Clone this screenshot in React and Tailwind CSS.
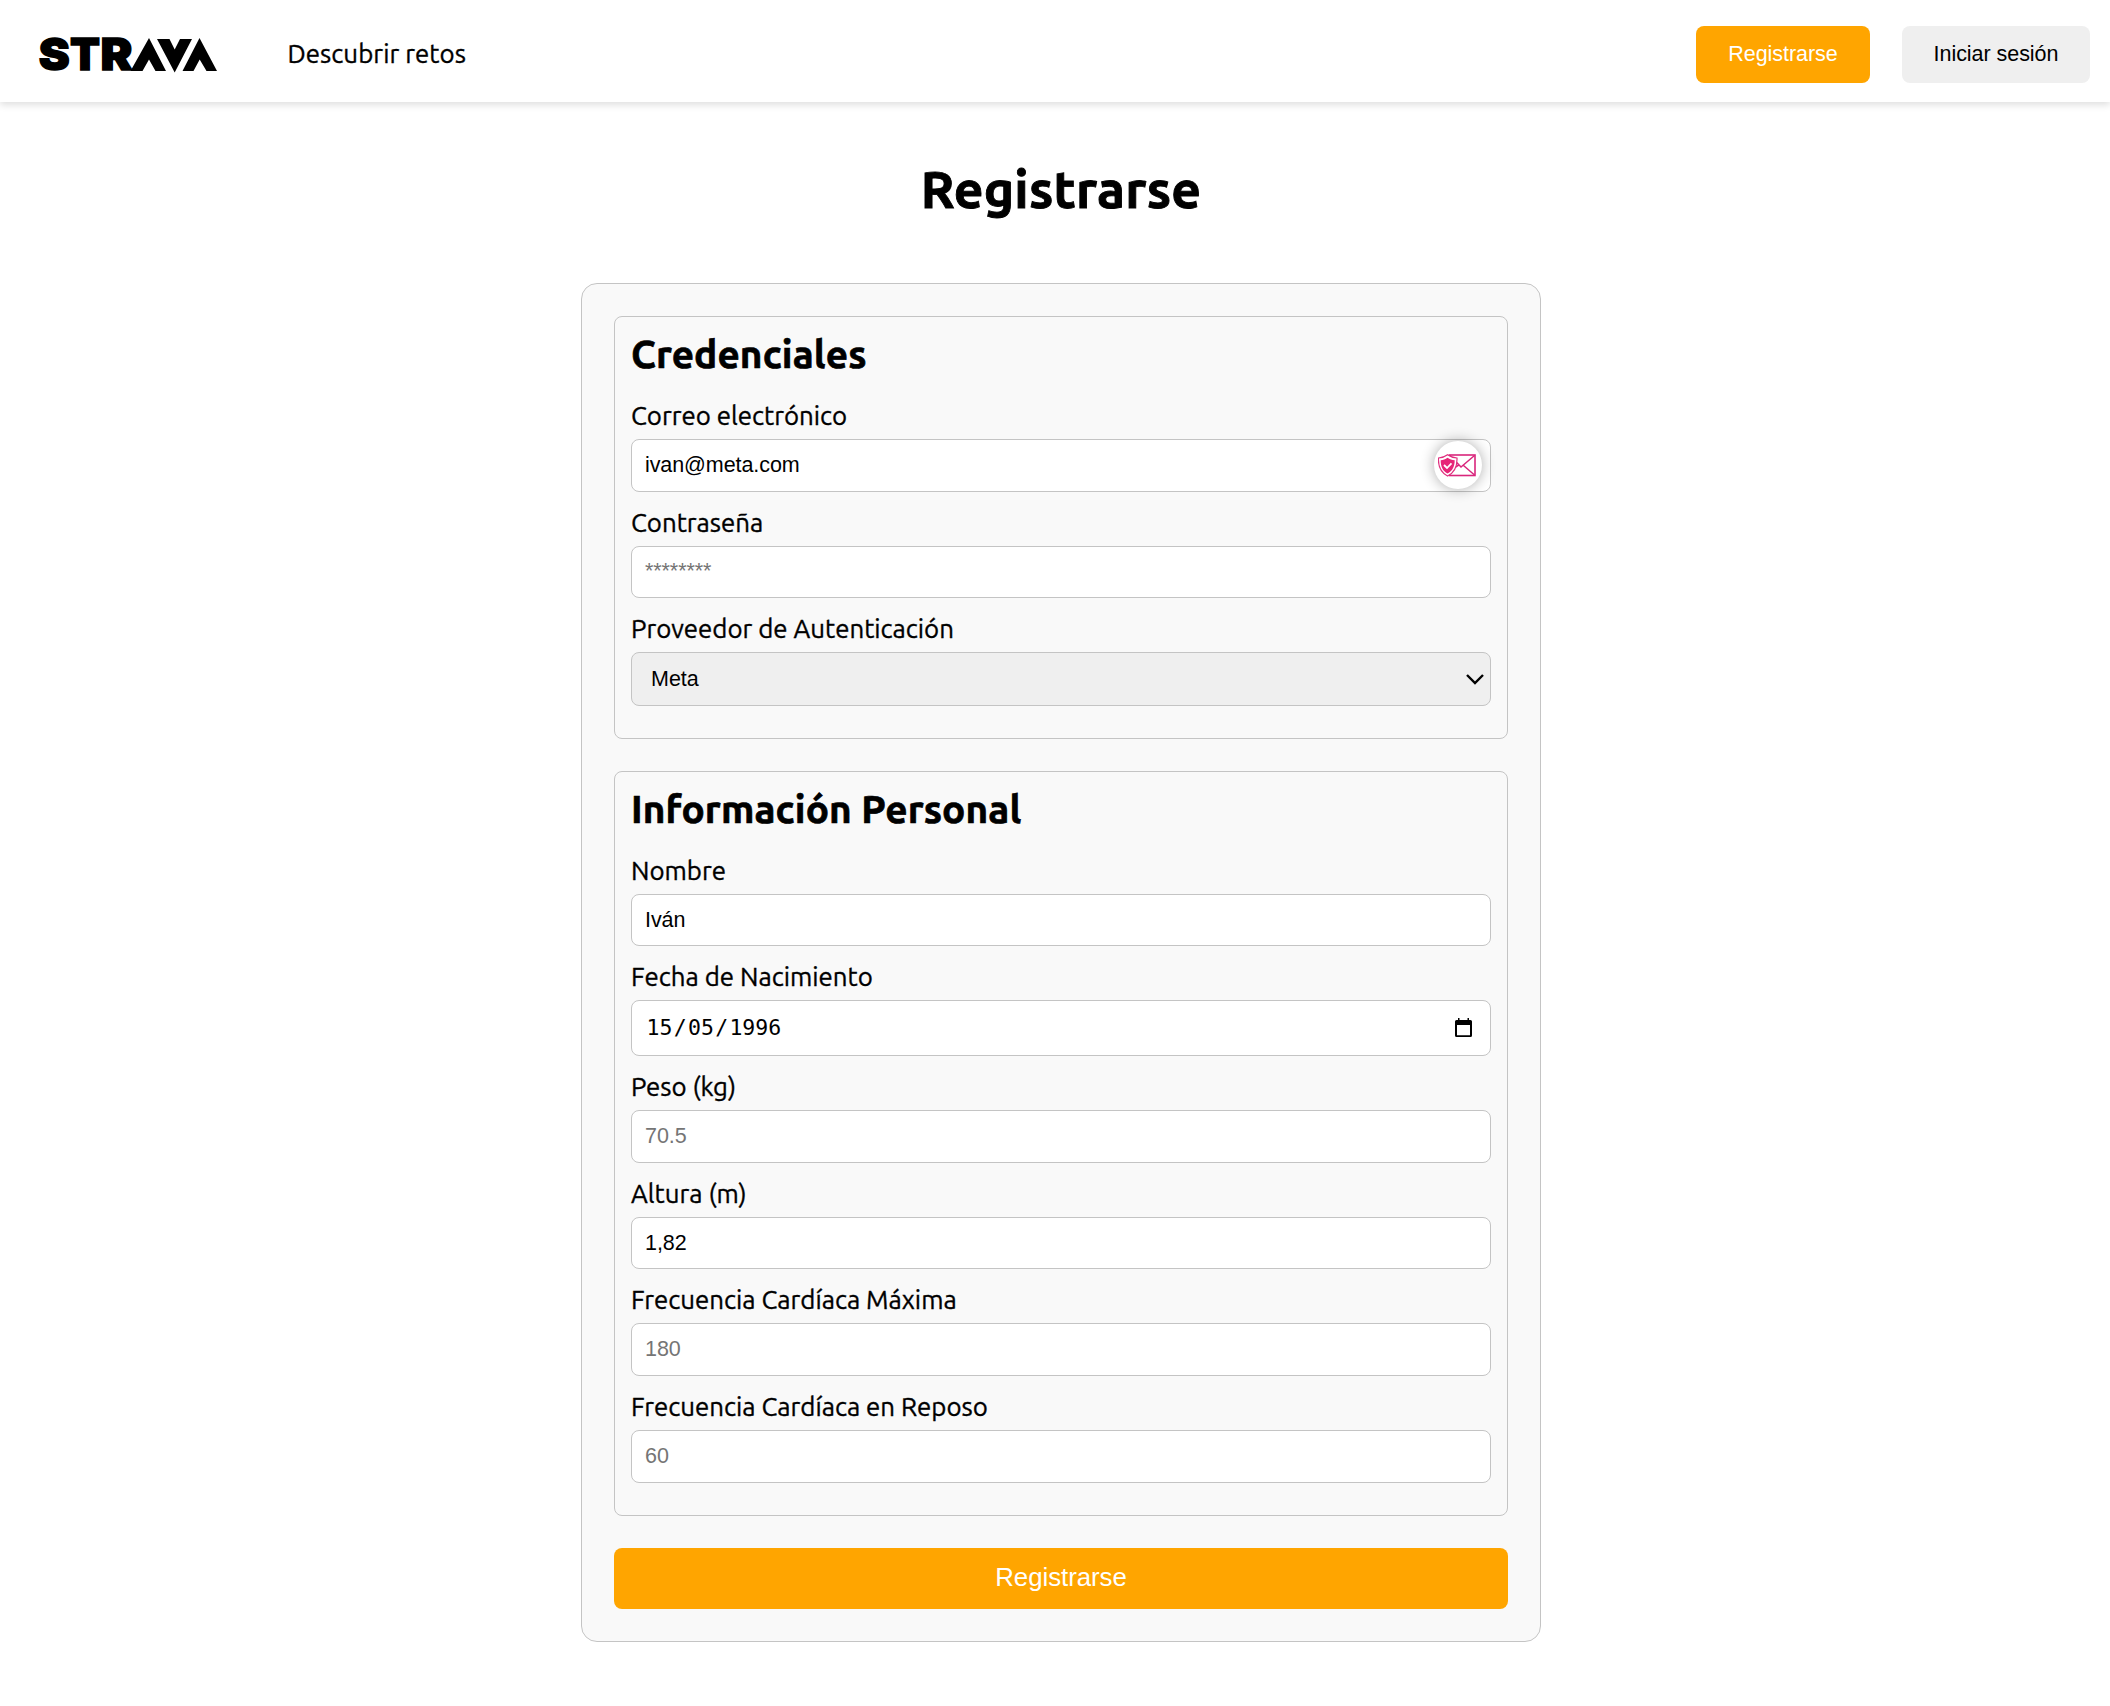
const fieldBox =
  "block w-full rounded-[8px] border border-[#c4c4c4] bg-white px-[13px] font-['Liberation_Sans',Arial,sans-serif] text-[21.5px] tracking-[-0.08px] text-black placeholder:text-[#757575] placeholder:opacity-100 outline-none";

function Logo() {
  return (
    <svg className="my-[-12px] block h-[60px] w-[180px] overflow-visible" viewBox="0 -12 180 60" role="img" aria-label="Strava">
      <g fontFamily="Inter, sans-serif" fontWeight="900" fontSize="43.5" stroke="#000" strokeWidth="1.4">
        <text x="0.8" y="33.4" textLength="31" lengthAdjust="spacingAndGlyphs">S</text>
        <text x="32" y="33.4" textLength="30" lengthAdjust="spacingAndGlyphs">T</text>
        <text x="62.6" y="33.4" textLength="32" lengthAdjust="spacingAndGlyphs">R</text>
      </g>
      {/* mountain chevrons */}
      <path d="M111 1 L128 34 H117.5 L111 22.5 L104.5 34 H92.5 Z" />
      <path d="M119 2 H131.5 L136.7 12.5 L142 2 H154 L136.7 35.5 Z" />
      <path d="M161.5 1 L179 34 H168.5 L161.7 22.5 L155.5 34 H144.5 Z" />
    </svg>
  );
}

function ShieldMail() {
  return (
    <span className="absolute top-[2px] right-[9px] flex size-[48px] items-center justify-center rounded-full bg-white shadow-[0_0_14px_rgba(0,0,0,0.32)]">
      <svg className="h-[24px] w-[40px]" viewBox="0 0 40 24" fill="none">
        <rect x="11.5" y="2" width="25.5" height="20.5" stroke="#d9267c" strokeWidth="1.6" />
        <path d="M12 2.5 L23 14 L36.5 2.5 M16 15 L21.5 11.5 M25.5 12.5 L36.5 22" stroke="#d9267c" strokeWidth="1.5" />
        <path d="M9.5 1.8 C12.5 4 15.5 4.8 19 5 C19.3 13.5 16.5 19.5 9.5 23 C2.8 19.5 0 13.5 0.5 5 C3.5 4.8 6.8 4 9.5 1.8 Z" fill="#fff" stroke="#e0307f" strokeWidth="1.2" />
        <path d="M9.5 4.8 C11.8 6.3 14 7 16.7 7.2 C16.7 13.4 14.4 18 9.5 20.5 C4.8 18 2.6 13.4 2.700 7.2 C5.1 7 7.4 6.3 9.5 4.8 Z" fill="#e62577" />
        <path d="M6 12 L9 15 L13.5 10.3" stroke="#fff" strokeWidth="1.8" />
      </svg>
    </span>
  );
}

function Field({ label, id, children }) {
  return (
    <div>
      <label htmlFor={id} className="block h-[54px] pt-[16px] text-[25.84px] leading-[30px] [-webkit-text-stroke:0.35px_black]">
        {label}
      </label>
      {children}
    </div>
  );
}

function Section({ title, children }) {
  return (
    <section className="rounded-[8px] border border-[#c4c4c4] px-[16px] pb-[32px]">
      <h2 className="h-[68px] pt-[5px] text-[38.76px] leading-[63px] font-bold tracking-[0.12px] [-webkit-text-stroke:0.7px_black]">
        {title}
      </h2>
      {children}
    </section>
  );
}

export default function App() {
  return (
    <div className="min-h-[1706px] bg-white font-['Ubuntu','Noto_Sans',sans-serif] text-black">
      <header className="flex h-[102px] items-center justify-between pt-[7px] pr-[20px] pl-[38px] shadow-[0_3px_7px_rgba(0,0,0,0.13)]">
        <nav className="flex items-center">
          <Logo />
          <a className="ml-[69.5px] pb-[2px] text-[25.84px] leading-[30px] tracking-[0.04px] [-webkit-text-stroke:0.35px_black]">
            Descubrir retos
          </a>
        </nav>
        <div className="flex gap-[32px] font-['Liberation_Sans',Arial,sans-serif] text-[21.5px] tracking-[-0.05px]">
          <button className="h-[57px] w-[174px] rounded-[8px] bg-[#ffa500] text-white">Registrarse</button>
          <button className="h-[57px] w-[188px] rounded-[8px] bg-[#efefef]">Iniciar sesión</button>
        </div>
      </header>

      <main className="ml-[581px] w-[960px]">
        <h1 className="h-[181px] pt-[57px] text-center text-[51.7px] leading-[60px] font-bold tracking-[0.2px] [-webkit-text-stroke:0.9px_black]">
          Registrarse
        </h1>

        <form className="flex flex-col gap-[32px] rounded-[16px] border border-[#c4c4c4] bg-[#f9f9f9] p-[32px]">
          <Section title="Credenciales">
            <Field label="Correo electrónico" id="email">
              <div className="relative">
                <input id="email" defaultValue="ivan@meta.com" className={`h-[53px] ${fieldBox}`} />
                <ShieldMail />
              </div>
            </Field>
            <Field label="Contraseña" id="password">
              <input id="password" type="password" placeholder="********" className={`h-[52px] pb-[2px] ${fieldBox}`} />
            </Field>
            <Field label="Proveedor de Autenticación" id="provider">
              <button
                id="provider"
                type="button"
                className="flex h-[54px] w-full items-center justify-between rounded-[8px] border border-[#c4c4c4] bg-[#efefef] pr-[6px] pl-[19px] font-['Liberation_Sans',Arial,sans-serif] text-[21.5px]"
              >
                <span>Meta</span>
                <svg className="size-[18px]" viewBox="0 0 18 18" fill="none" stroke="#000" strokeWidth="2.4">
                  <path d="M1 5 L9 13 L17 5" />
                </svg>
              </button>
            </Field>
          </Section>

          <Section title="Información Personal">
            <Field label="Nombre" id="name">
              <input id="name" defaultValue="Iván" className={`h-[52px] ${fieldBox}`} />
            </Field>
            <Field label="Fecha de Nacimiento" id="birth">
              <div
                id="birth"
                className="flex h-[56px] items-center justify-between rounded-[8px] border border-[#c4c4c4] bg-white pr-[18px] pl-[14.5px] font-['DejaVu_Sans_Mono',monospace] text-[21.5px]"
              >
                <span>
                  15<span className="mx-[1.3px]">/</span>05<span className="mx-[1.3px]">/</span>1996
                </span>
                <svg className="mb-px h-[19px] w-[17px]" viewBox="0 0 17 19">
                  <path d="M3 0 H4.500 V2 H12.500 V0 H14 V2 H15.500 Q17 2 17 3.500 V17.500 Q17 19 15.500 19 H1.500 Q0 19 0 17.500 V3.500 Q0 2 1.500 2 H3 Z M2 7 V17.300 H15 V7 Z" fillRule="evenodd" />
                </svg>
              </div>
            </Field>
            <Field label="Peso (kg)" id="weight">
              <input id="weight" placeholder="70.5" className={`h-[53px] ${fieldBox}`} />
            </Field>
            <Field label="Altura (m)" id="height">
              <input id="height" defaultValue="1,82" className={`h-[52px] ${fieldBox}`} />
            </Field>
            <Field label="Frecuencia Cardíaca Máxima" id="max-hr">
              <input id="max-hr" placeholder="180" className={`h-[53px] ${fieldBox}`} />
            </Field>
            <Field label="Frecuencia Cardíaca en Reposo" id="rest-hr">
              <input id="rest-hr" placeholder="60" className={`h-[53px] ${fieldBox}`} />
            </Field>
          </Section>

          <button type="button" className="h-[61px] rounded-[8px] bg-[#ffa500] pb-[2px] font-['Liberation_Sans',Arial,sans-serif] text-[25.84px] tracking-[-0.05px] text-white">
            Registrarse
          </button>
        </form>
      </main>
    </div>
  );
}
